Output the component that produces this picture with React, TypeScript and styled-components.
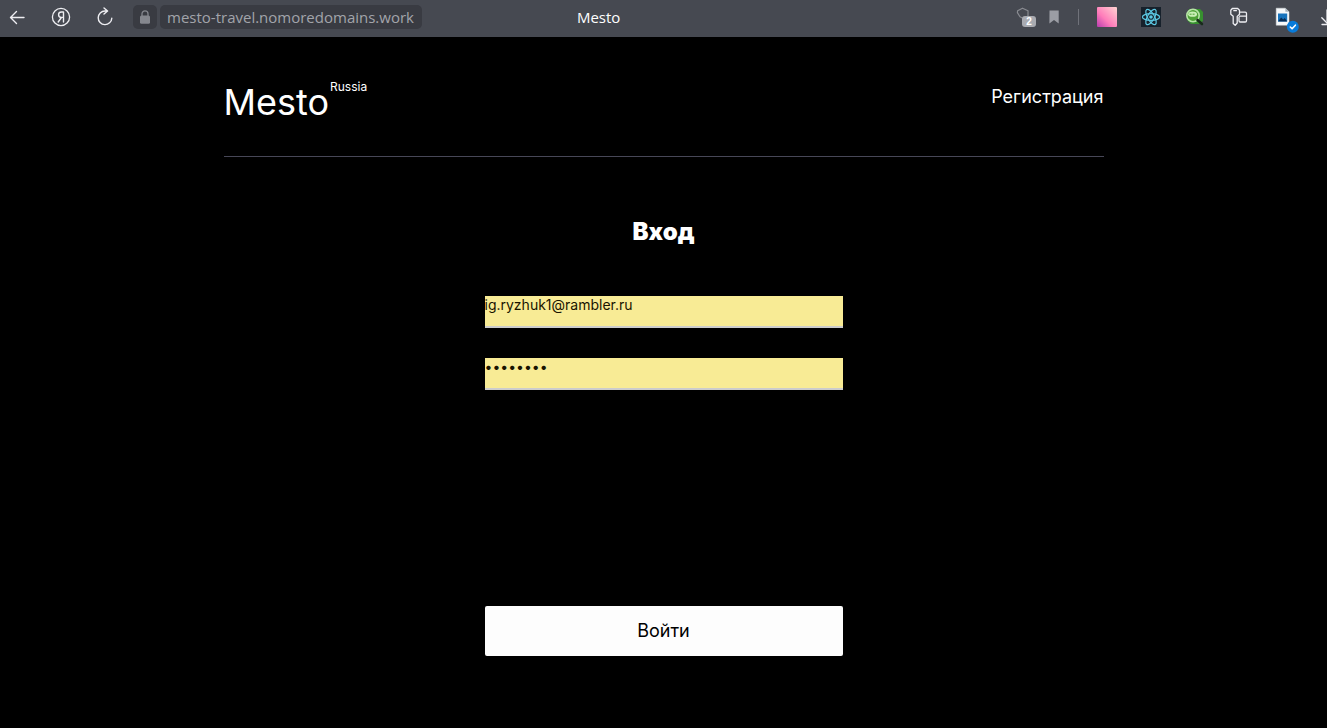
import React from "react";
import styled, { createGlobalStyle } from "styled-components";

const GlobalStyle = createGlobalStyle`
  * { box-sizing: border-box; }
  body {
    margin: 0;
    background: #000;
    color: #fff;
    font-family: Inter, "Liberation Sans", sans-serif;
    overflow-x: hidden;
  }
`;

const BrowserBar = styled.div`
  display: flex;
  align-items: center;
  height: 37px;
  padding: 0 0 3px 7px;
  background: #464951;
  font-family: "Open Sans", "Noto Sans", sans-serif;
  font-size: 15px;
  line-height: 24px;
  overflow: hidden;
`;

const ToolGroup = styled.div`
  display: flex;
  flex: none;
  gap: 24px;
`;

const ToolButton = styled.button`
  position: relative;
  flex: none;
  width: 20px;
  height: 20px;
  padding: 0;
  border: 0;
  background: none;
  color: #eeeef2;

  svg {
    display: block;
    overflow: visible;
  }
`;

const AddressGroup = styled.div`
  display: flex;
  flex: none;
  gap: 3px;
  margin-left: 18px;
`;

const LockButton = styled.button`
  display: flex;
  align-items: center;
  justify-content: center;
  width: 24px;
  height: 24px;
  padding: 0;
  border: 0;
  border-radius: 5px;
  background: #393b42;
  color: #85878e;
`;

const Address = styled.div`
  height: 24px;
  padding: 0 8px 0 7px;
  border-radius: 5px;
  background: #393b42;
  color: #a2a4aa;
  white-space: nowrap;
`;

const TabTitle = styled.div`
  flex: 1;
  padding-left: 155px;
  white-space: nowrap;
`;

const PageTools = styled.div`
  display: flex;
  flex: none;
  align-items: center;
  gap: 10px;
  margin-right: 14px;
`;

const Separator = styled.span`
  width: 1px;
  height: 16px;
  margin-right: 18px;
  background: #70727a;
`;

const Extensions = styled(ToolGroup)`
  margin-right: -10px;
`;

const Page = styled.div`
  width: 100%;
  max-width: 880px;
  margin: 0 auto;
`;

const Header = styled.header`
  display: flex;
  justify-content: space-between;
  align-items: flex-start;
  height: 120px;
  padding-top: 42px;
  border-bottom: 1px solid #474757;
`;

const Logo = styled.a`
  display: flex;
  align-items: flex-start;
  gap: 1px;
  color: #fff;
  font-size: 36px;
  line-height: 46px;
  text-decoration: none;
`;

const Region = styled.span`
  font-size: 12px;
  line-height: 16px;
`;

const HeaderLink = styled.a`
  padding-top: 6px;
  color: #fff;
  font-size: 18px;
  line-height: 24px;
  text-decoration: none;
`;

const Form = styled.form`
  display: flex;
  flex-direction: column;
  width: 100%;
  max-width: 358px;
  margin: 60px auto;
`;

const Heading = styled.h1`
  margin: 0 0 49px;
  font-size: 24px;
  font-weight: 900;
  line-height: 30px;
  text-align: center;
`;

const Field = styled.input`
  width: 100%;
  height: 32px;
  margin-bottom: 30px;
  padding: 0 0 14px;
  border: 0;
  border-bottom: 2px solid #ccc;
  border-radius: 0;
  background: #f8eb95;
  color: #191400;
  font-family: inherit;
  font-size: 14px;
  line-height: 16px;
  outline: none;
`;

const Submit = styled.button`
  height: 50px;
  margin-top: 186px;
  border: 0;
  border-radius: 2px;
  background: #fdfdfd;
  color: #000;
  font-family: inherit;
  font-size: 18px;
  line-height: 22px;
`;

const stroke = { fill: "none", stroke: "currentColor", strokeLinecap: "round", strokeLinejoin: "round" } as const;

const Tool = ({ label, children }: { label: string; children: React.ReactNode }) => (
  <ToolButton type="button" aria-label={label}>
    <svg width="20" height="20" viewBox="0 0 20 20" aria-hidden="true">
      {children}
    </svg>
  </ToolButton>
);

const Browser = () => (
  <BrowserBar>
    <ToolGroup>
      <Tool label="Назад">
        <path {...stroke} strokeWidth="1.4" d="M17 10.5H3.5M9.5 4.5l-6 6 6 6" />
      </Tool>
      <Tool label="Яндекс">
        <circle {...stroke} strokeWidth="1.3" cx="10" cy="10" r="8.6" />
        <path {...stroke} strokeWidth="1.4" d="M12.5 15V5h-2c-3.9 0-3.9 5.4 0 5.4h2M10.4 10.5 7.2 15" />
      </Tool>
      <Tool label="Обновить">
        <path {...stroke} strokeWidth="1.4" d="M16.8 11.2A6.8 6.8 0 1 1 10 4h2.2M9 1l3.6 3L9 7" />
      </Tool>
    </ToolGroup>
    <AddressGroup>
      <LockButton type="button" aria-label="Безопасность">
        <svg width="12" height="14" viewBox="0 0 12 14" aria-hidden="true">
          <path fill="none" stroke="currentColor" strokeWidth="1.3" d="M3 6V3.8a3 3 0 0 1 6 0V6" />
          <rect x="1" y="5.4" width="10" height="8.4" rx="1.5" fill="currentColor" />
        </svg>
      </LockButton>
      <Address>mesto-travel.nomoredomains.work</Address>
    </AddressGroup>
    <TabTitle>Mesto</TabTitle>
    <PageTools>
      <Tool label="Защита">
        <path fill="none" stroke="#898b91" strokeWidth="1.2" strokeLinejoin="round" d="M8.5 1.2 14 3.8V9L9.2 11.6 6 9.8 3.4 5.6 3.6 3.8Z" />
        <rect x="8" y="9" width="14" height="11" rx="3" fill="#a9abb1" />
        <text x="15" y="18" textAnchor="middle" fontSize="10" fontWeight="700" fill="#fff">2</text>
      </Tool>
      <Tool label="Закладка">
        <path fill="#9b9da4" d="M5.5 3.4h9.2v13.2L10 12.9l-4.6 3.7Z" />
      </Tool>
    </PageTools>
    <Separator />
    <Extensions>
      <Tool label="Градиент">
        <defs>
          <linearGradient id="pink" x1="0" y1="1" x2="1" y2="0">
            <stop offset="0" stopColor="#b93cae" />
            <stop offset="0.4" stopColor="#ff7cba" />
            <stop offset="1" stopColor="#ffd5d2" />
          </linearGradient>
        </defs>
        <rect width="20" height="20" rx="1" fill="url(#pink)" />
      </Tool>
      <Tool label="React">
        <rect width="20" height="20" fill="#17212b" />
        <g fill="none" stroke="#5cc9e4" strokeWidth="1.2">
          <ellipse cx="10" cy="10" rx="8.6" ry="3.4" />
          <ellipse cx="10" cy="10" rx="8.6" ry="3.4" transform="rotate(60 10 10)" />
          <ellipse cx="10" cy="10" rx="8.6" ry="3.4" transform="rotate(120 10 10)" />
        </g>
        <circle cx="10" cy="10" r="1.8" fill="#5cc9e4" />
      </Tool>
      <Tool label="Поиск">
        <path fill="#37912f" d="M4 2h11l3 3v9l-4 3H6l-4-4Z" />
        <circle cx="8" cy="8.5" r="6.2" fill="#4fa238" stroke="#b6e4a6" strokeWidth="1.6" />
        <ellipse cx="7.6" cy="7.2" rx="4.4" ry="2.6" fill="#c9efb6" />
        <path stroke="#4fa238" strokeWidth="1" strokeDasharray="2 1" d="M4.6 7.2h6" />
        <path stroke="#182b1a" strokeWidth="2.6" strokeLinecap="round" d="m12.5 13 4.5 4" />
      </Tool>
      <Tool label="Пароли">
        <g {...stroke} strokeWidth="1.3">
          <path d="M3.3 1.5h5.4l1.8 1.7v4L8.2 9.4V16l-2 2.2L4.2 16.5V9.3L1.8 7.2v-4Z" />
          <path d="M4.8 3.7h2.6M10.8 5.2h5.4c.8 0 1.3.5 1.3 1.3v7.2c0 .8-.5 1.3-1.3 1.3h-5c-.8 0-1.2-.5-1.2-1.3v-3.5M10.5 9.2h7" />
        </g>
      </Tool>
      <Tool label="Документ">
        <path fill="#f6f8fa" stroke="#d5dadd" strokeWidth="0.5" d="M3.2 1.2h9.2l3.6 3.6v13.4H3.2Z" />
        <path fill="#a5b2bc" d="M12.4 1.2 16 4.8h-3.6Z" />
        <path fill="#1673bd" d="M5 6.5h9.2v8H5Z" />
        <path fill="#072d56" d="m5 14.5 3.2-4 2 2 1.6-1.5 2.4 3.5Z" />
        <circle cx="19.8" cy="19.8" r="6" fill="#087bda" />
        <path {...stroke} stroke="#fff" strokeWidth="1.6" d="m17.3 20 1.8 1.8 3.3-3.6" />
      </Tool>
      <Tool label="Загрузки">
        <path {...stroke} strokeWidth="1.3" d="M10 3v13M4.8 10.8l5.2 5.2 5.2-5.2M5 17.5h10" />
      </Tool>
    </Extensions>
  </BrowserBar>
);

export default function App() {
  return (
    <>
      <GlobalStyle />
      <Browser />
      <Page>
        <Header>
          <Logo href="#">
            Mesto<Region>Russia</Region>
          </Logo>
          <HeaderLink href="#signup">Регистрация</HeaderLink>
        </Header>
        <main>
          <Form onSubmit={(e) => e.preventDefault()}>
            <Heading>Вход</Heading>
            <Field type="email" aria-label="Email" defaultValue="ig.ryzhuk1@rambler.ru" />
            <Field type="password" aria-label="Пароль" defaultValue="password" />
            <Submit type="submit">Войти</Submit>
          </Form>
        </main>
      </Page>
    </>
  );
}
